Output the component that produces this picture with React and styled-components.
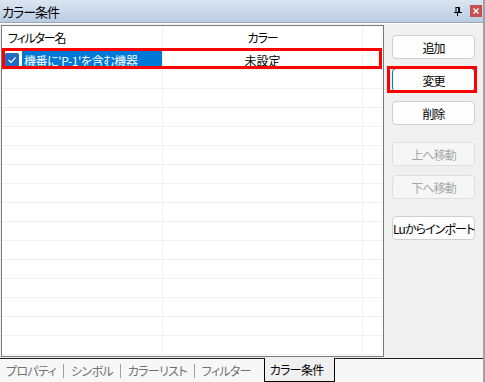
import React from 'react'
import styled, { createGlobalStyle } from 'styled-components'

const GlobalStyle = createGlobalStyle`
  html, body {
    margin: 0;
    padding: 0;
    background: #f0f0f0;
  }
  body {
    font-family: "Noto Sans CJK JP", "Noto Sans", sans-serif;
    font-feature-settings: "palt";
    font-size: 12px;
    color: #000;
  }
`

const Window = styled.div`
  width: 483px;
  height: 382px;
  display: flex;
  flex-direction: column;
  border-right: 2px solid #a0a0a0;
  background: #f0f0f0;
  overflow: hidden;
`

const TitleBar = styled.div`
  height: 22px;
  flex-shrink: 0;
  display: flex;
  align-items: center;
  justify-content: space-between;
  padding-left: 2px;
  background: linear-gradient(#dbe5f2, #b9cce4);
  border-bottom: 1px solid #9aa5b2;
`

const Title = styled.span`
  font-size: 13px;
  letter-spacing: -1px;
`

const TitleButtons = styled.div`
  display: flex;
  align-items: center;
  gap: 8px;
  padding-right: 1px;
`

const CloseButton = styled.div`
  width: 12px;
  height: 12px;
  background: #c75050;
  display: flex;
  align-items: center;
  justify-content: center;
`

const Body = styled.div`
  flex: 1;
  display: flex;
  border-top: 1px solid #fff;
  padding: 1px 0 1px 1px;
  min-height: 0;
`

const Grid = styled.div`
  width: 381px;
  border: 1px solid #7a7a7a;
  background: #fff;
  overflow: hidden;
`

const Row = styled.div`
  display: grid;
  grid-template-columns: 161px 200px 20px;
  height: ${p => (p.header ? '25px' : '19px')};
  box-sizing: border-box;
  border-bottom: ${p => (p.header ? 'none' : '1px solid #f0f0f0')};
  position: relative;

  ${p => p.marked && `
    &::after {
      content: '';
      position: absolute;
      top: -3px;
      bottom: 0;
      left: 0;
      right: 1px;
      border: 3px solid #f00;
      pointer-events: none;
    }
  `}
`

const Cell = styled.div`
  display: flex;
  align-items: center;
  justify-content: ${p => (p.center ? 'center' : 'flex-start')};
  padding-left: ${p => (p.center ? '0' : '6px')};
  padding-bottom: ${p => (p.raised ? '2px' : '0')};
  letter-spacing: ${p => (p.raised ? '-1.2px' : '0')};
  border-right: 1px solid #f0f0f0;
  white-space: nowrap;
  overflow: hidden;

  &:last-child {
    border-right: none;
  }
`

const CheckCell = styled.div`
  display: flex;
  align-items: stretch;
  border-right: 1px solid #f0f0f0;
  overflow: hidden;
`

const CheckArea = styled.div`
  width: 20px;
  flex-shrink: 0;
  display: flex;
  align-items: center;
  justify-content: center;
`

const CheckBox = styled.div`
  width: 14px;
  height: 14px;
  border-radius: 2px;
  background: #1d6cc8;
  display: flex;
  align-items: center;
  justify-content: center;
`

const SelectedText = styled.div`
  flex: 1;
  background: #0078d7;
  color: #fff;
  display: flex;
  align-items: center;
  padding-left: 2px;
  letter-spacing: -0.4px;
  white-space: nowrap;
`

const SidePanel = styled.div`
  flex: 1;
  display: flex;
  flex-direction: column;
  gap: 9px;
  padding: 10px 0 0 8px;
`

const Button = styled.button`
  width: 83px;
  height: 24px;
  padding: 0;
  font-family: inherit;
  font-feature-settings: "palt";
  font-size: 12px;
  letter-spacing: -0.9px;
  color: ${p => (p.disabled ? '#a8a8a8' : '#000')};
  background: ${p => (p.disabled ? '#f6f6f6' : '#fdfdfd')};
  border: 1px solid ${p => (p.focused ? '#0078d7' : p.disabled ? '#dedede' : '#cfcfcf')};
  border-radius: 4px;
  margin-top: ${p => p.spaced || 0}px;
  position: relative;
  white-space: nowrap;

  ${p => p.marked && `
    &::after {
      content: '';
      position: absolute;
      top: -3px;
      bottom: -2px;
      left: -6px;
      right: -3px;
      border: 3px solid #f00;
      pointer-events: none;
    }
  `}
`

const TabStrip = styled.div`
  height: 23px;
  flex-shrink: 0;
  display: flex;
  align-items: stretch;
  border-top: 1px solid #1e1e1e;
  background: #f7f7f7;
`

const Tab = styled.div`
  display: flex;
  align-items: center;
  padding: ${p => (p.active ? '0 10px 0 5px' : '0 7px')};
  color: ${p => (p.active ? '#000' : '#707070')};
  font-size: 12px;
  letter-spacing: -0.7px;
  white-space: nowrap;
  ${p => p.active && `
    margin-top: -1px;
    height: 23px;
    background: #f0f0f0;
    border: 1px solid #000;
    border-top: none;
    margin-left: 6px;
  `}
  &:first-child {
    padding-left: 6px;
  }
`

const Sep = styled.div`
  width: 1px;
  height: 14px;
  align-self: center;
  background: #a0a0a0;
`

const PinIcon = () => (
  <svg width="8" height="9" viewBox="0 0 8 9">
    <path d="M1.5 0.5h4v4.5M2 0.5v4.5M4.5 0.5v4.5M5.5 0.5v4.5" stroke="#000" fill="none" />
    <path d="M0 5.5h8M3.5 5.5v3.5" stroke="#000" fill="none" />
  </svg>
)

const CloseIcon = () => (
  <svg width="6" height="6" viewBox="0 0 6 6">
    <path d="M0.5 0.5l5 5M5.5 0.5l-5 5" stroke="#fff" strokeWidth="1.4" />
  </svg>
)

const CheckMark = () => (
  <svg width="10" height="8" viewBox="0 0 10 8">
    <path d="M1.5 4l2.5 2.5 4.5-5" stroke="#fff" strokeWidth="1.2" fill="none" />
  </svg>
)

const emptyRows = Array.from({ length: 16 })

const App = () => {
  return (
    <>
      <GlobalStyle />
      <Window>
        <TitleBar>
          <Title>カラー条件</Title>
          <TitleButtons>
            <PinIcon />
            <CloseButton><CloseIcon /></CloseButton>
          </TitleButtons>
        </TitleBar>
        <Body>
          <Grid>
            <Row header>
              <Cell raised>フィルター名</Cell>
              <Cell center raised>カラー</Cell>
              <Cell />
            </Row>
            <Row marked>
              <CheckCell>
                <CheckArea>
                  <CheckBox><CheckMark /></CheckBox>
                </CheckArea>
                <SelectedText>機番に'P-1'を含む機器</SelectedText>
              </CheckCell>
              <Cell center>未設定</Cell>
              <Cell />
            </Row>
            {emptyRows.map((_, i) => (
              <Row key={i}>
                <Cell />
                <Cell />
                <Cell />
              </Row>
            ))}
          </Grid>
          <SidePanel>
            <Button>追加</Button>
            <Button focused marked>変更</Button>
            <Button>削除</Button>
            <Button disabled spaced={8}>上へ移動</Button>
            <Button disabled>下へ移動</Button>
            <Button spaced={8}>Luからインポート</Button>
          </SidePanel>
        </Body>
        <TabStrip>
          <Tab>プロパティ</Tab>
          <Sep />
          <Tab>シンボル</Tab>
          <Sep />
          <Tab>カラーリスト</Tab>
          <Sep />
          <Tab>フィルター</Tab>
          <Tab active>カラー条件</Tab>
        </TabStrip>
      </Window>
    </>
  )
}

export default App
